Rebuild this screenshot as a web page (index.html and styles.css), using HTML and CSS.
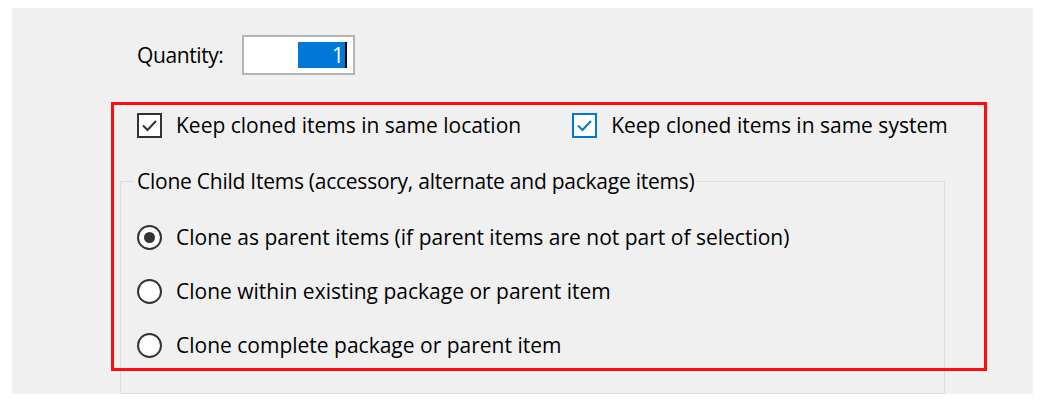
FILE: index.html
```html
<!DOCTYPE html>
<html>
	<head>
		<title>Clone Items</title>
		<link rel="stylesheet" href="styles.css">
	</head>
	<body>
		<div class="panel">
			<div class="quantity-row">
				<span class="quantity-label">Quantity:</span>
				<div class="quantity-input">
					<span class="selection">1</span>
					<span class="caret"></span>
				</div>
			</div>
			<div class="check-row">
				<div class="check-item">
					<span class="checkbox">
						<svg width="21" height="21" viewBox="0 0 21 21"><path d="M4 10.5 L8.5 15 L17 6" fill="none" stroke="#333" stroke-width="2"/></svg>
					</span>
					<span>Keep cloned items in same location</span>
				</div>
				<div class="check-item focused">
					<span class="checkbox">
						<svg width="21" height="21" viewBox="0 0 21 21"><path d="M4 10.5 L8.5 15 L17 6" fill="none" stroke="#0078d7" stroke-width="2"/></svg>
					</span>
					<span>Keep cloned items in same system</span>
				</div>
			</div>
			<fieldset class="child-group">
				<legend>Clone Child Items (accessory, alternate and package items)</legend>
				<div class="radio-list">
					<div class="radio-item">
						<span class="radio checked"></span>
						<span>Clone as parent items (if parent items are not part of selection)</span>
					</div>
					<div class="radio-item">
						<span class="radio"></span>
						<span>Clone within existing package or parent item</span>
					</div>
					<div class="radio-item">
						<span class="radio"></span>
						<span>Clone complete package or parent item</span>
					</div>
				</div>
			</fieldset>
			<div class="highlight"></div>
		</div>
	</body>
</html>
```

FILE: styles.css
```css
* {
	box-sizing: border-box;
}

body {
	margin: 0;
	background-color: #fff;
}

.panel {
	position: relative;
	margin: 8px 0 0 12px;
	width: 1021px;
	height: 386px;
	padding: 27px 0 0 108px;
	background-color: #f0f0f0;
	color: #000;
	font-family: 'Open Sans', 'Liberation Sans', Arial, sans-serif;
	font-size: 21px;
	line-height: 24px;
}

.quantity-row {
	display: flex;
	align-items: center;
	margin-left: 17px;
	height: 40px;
}

.quantity-label {
	width: 105px;
	letter-spacing: -0.4px;
}

.quantity-input {
	display: flex;
	align-items: center;
	justify-content: flex-end;
	width: 113px;
	height: 40px;
	padding-right: 6px;
	border: 2px solid #b4b4b4;
	background-color: #fff;
}

.selection {
	width: 47px;
	height: 26px;
	line-height: 26px;
	padding-right: 1px;
	text-align: right;
	background-color: #0078d7;
	color: #fff;
}

.caret {
	width: 2px;
	height: 26px;
	background-color: #000;
}

.check-row {
	display: flex;
	align-items: center;
	gap: 51px;
	margin-top: 37px;
	margin-left: 17px;
	height: 26px;
}

.check-item {
	display: flex;
	align-items: center;
	gap: 14px;
}

.checkbox {
	display: flex;
	align-items: center;
	justify-content: center;
	width: 25px;
	height: 25px;
	border: 2px solid #333;
	background-color: #fff;
}

.check-item.focused .checkbox {
	border-color: #0078d7;
}

.child-group {
	width: 825px;
	height: 225px;
	margin: 31px 0 0 0;
	padding: 0 0 0 16px;
	border: 1px solid #dcdcdc;
}

.child-group legend {
	margin-left: -3px;
	padding: 0 3px;
	letter-spacing: -0.25px;
}

.radio-list {
	display: flex;
	flex-direction: column;
	padding-top: 17px;
}

.radio-item {
	display: flex;
	align-items: center;
	gap: 14px;
	height: 54px;
}

.radio {
	display: flex;
	align-items: center;
	justify-content: center;
	width: 25px;
	height: 25px;
	border: 2px solid #333;
	border-radius: 50%;
	background-color: #fff;
}

.radio.checked:after {
	content: "";
	width: 11px;
	height: 11px;
	border-radius: 50%;
	background-color: #333;
}

.highlight {
	position: absolute;
	left: 99px;
	top: 94px;
	width: 876px;
	height: 269px;
	border: 3px solid #ff0d0d;
}
```
